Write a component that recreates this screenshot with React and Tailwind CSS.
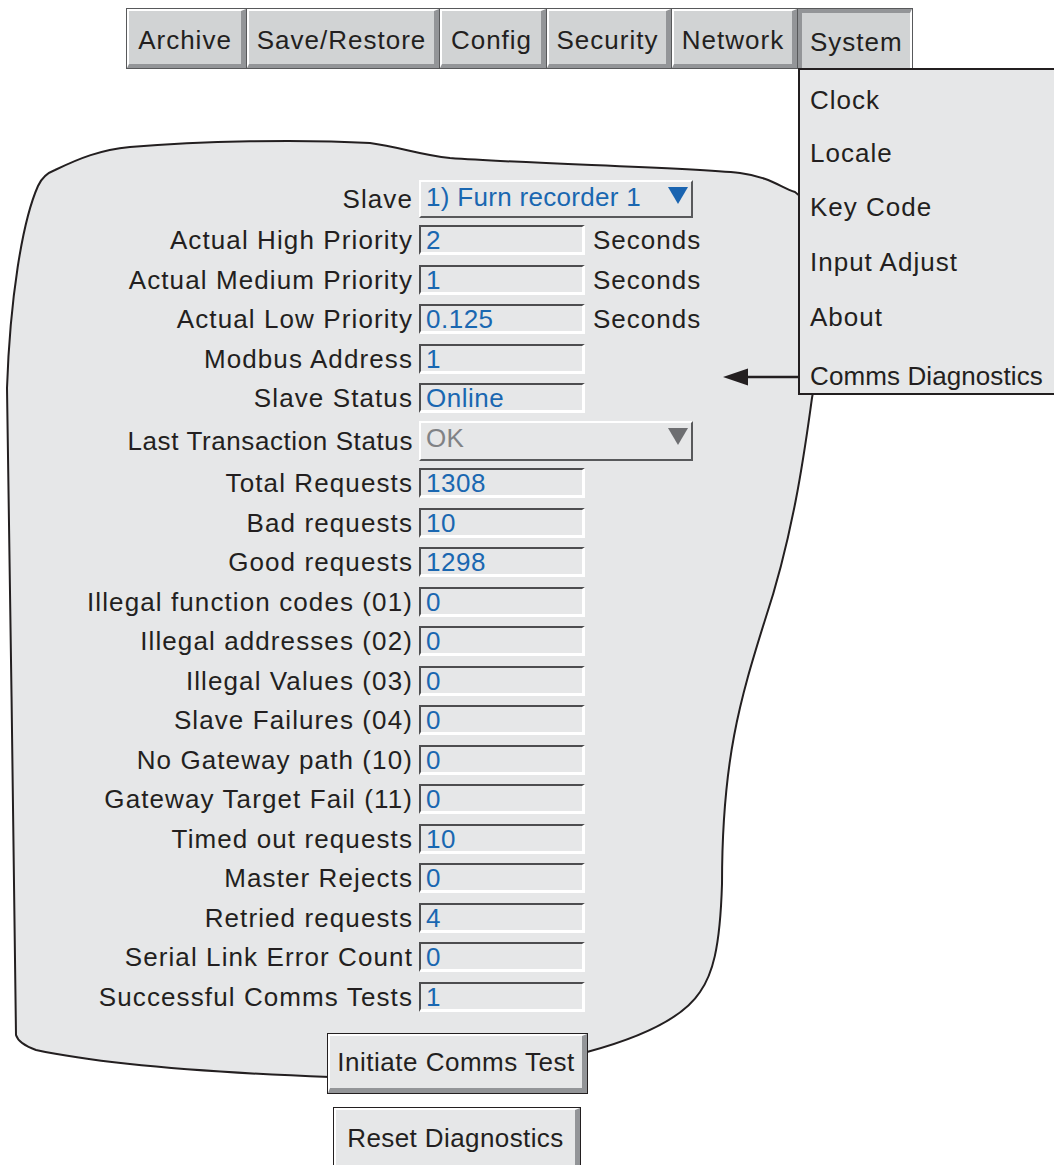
import React from "react";

const topRows = [
  ["Actual High Priority", "2", true],
  ["Actual Medium Priority", "1", true],
  ["Actual Low Priority", "0.125", true],
  ["Modbus Address", "1"],
  ["Slave Status", "Online"],
];

const counterRows = [
  ["Total Requests", "1308"],
  ["Bad requests", "10"],
  ["Good requests", "1298"],
  ["Illegal function codes (01)", "0"],
  ["Illegal addresses (02)", "0"],
  ["Illegal Values (03)", "0"],
  ["Slave Failures (04)", "0"],
  ["No Gateway path (10)", "0"],
  ["Gateway Target Fail (11)", "0"],
  ["Timed out requests", "10"],
  ["Master Rejects", "0"],
  ["Retried requests", "4"],
  ["Serial Link Error Count", "0"],
  ["Successful Comms Tests", "1"],
];

const tabs = [
  ["Archive", "w-[119px]"],
  ["Save/Restore", "w-[192px]"],
  ["Config", "w-[106px]"],
  ["Security", "w-[124px]"],
  ["Network", "w-[125px]"],
];

const menuItems = [
  ["Clock", "h-[53px]"],
  ["Locale", "h-[53px]"],
  ["Key Code", "h-[55px]"],
  ["Input Adjust", "h-[55px]"],
  ["About", "h-[55px]"],
];

function Label({ children, tight }) {
  return (
    <div
      className={`w-[413px] shrink-0 text-right leading-[30px] whitespace-nowrap ${
        tight ? "tracking-[0.6px]" : "tracking-[1.1px]"
      }`}
    >
      {children}
    </div>
  );
}

function ValueBox({ value }) {
  return (
    <div className="ml-[6px] h-[30px] w-[166px] border-t-2 border-l-2 border-t-[#4d4d4f] border-l-[#4d4d4f] border-r-[3px] border-b-[3px] border-r-white border-b-white bg-[#e6e7e8] pl-[5px] text-[#1a67b1] tracking-[0.5px] leading-[27px] overflow-hidden whitespace-nowrap">
      {value}
    </div>
  );
}

function Dropdown({ text, textClass, arrowClass }) {
  return (
    <div className="ml-[6px] flex h-full w-[274px] items-start justify-between border-t-2 border-l-2 border-t-white border-l-white border-r-2 border-b-2 border-r-[#58595b] border-b-[#58595b] bg-[#e6e7e8] pl-[5px] pr-[3px]">
      <span className={`leading-[30px] tracking-[0.3px] whitespace-nowrap ${textClass}`}>{text}</span>
      <svg width="20" height="17" viewBox="0 0 20 17" className={`mt-[5px] ${arrowClass}`}>
        <polygon points="0,0 20,0 10,17" fill="currentColor" />
      </svg>
    </div>
  );
}

function Row({ label, value, seconds }) {
  return (
    <div className="flex h-[39.5px] items-center">
      <Label>{label}</Label>
      <ValueBox value={value} />
      {seconds && <span className="ml-[8px] tracking-[1px] leading-[30px]">Seconds</span>}
    </div>
  );
}

function BevelButton({ children, outer, inner }) {
  return (
    <div className={`border border-[#231f20] ${outer}`}>
      <div
        className={`flex items-center justify-center border-t-2 border-l-2 border-t-white border-l-white border-r-[5px] border-b-[5px] border-r-[#939598] border-b-[#939598] bg-[#e6e7e8] leading-[30px] ${inner}`}
      >
        {children}
      </div>
    </div>
  );
}

export default function App() {
  return (
    <div className="relative h-[1165px] w-[1054px] overflow-hidden bg-white font-['Liberation_Sans',Arial,sans-serif] text-[26px] leading-[30px] text-[#231f20]">
      {/* panel outline and pointer arrow */}
      <svg className="absolute inset-0" width="1054" height="1165" viewBox="0 0 1054 1165">
        <path
          d="M 7 388
             C 10 300, 22 222, 38 186
             C 42 177, 47 173, 55 170
             C 80 158, 100 150, 130 147
             C 200 141, 300 139, 370 143
             C 400 147, 420 155, 450 158
             C 530 164, 680 167, 740 173
             C 770 177, 780 187, 795 192
             C 822 210, 832 300, 812 398
             C 806 440, 795 530, 765 620
             C 740 700, 722 760, 722 884
             C 720 950, 712 975, 700 992
             C 685 1015, 650 1035, 587 1052
             L 330 1077
             C 250 1074, 120 1068, 36 1050
             C 25 1046, 18 1042, 16 1035
             C 14 900, 10 550, 7 388 Z"
          fill="#e6e7e8"
          stroke="#231f20"
          strokeWidth="2"
        />
        <line x1="745" y1="377" x2="800" y2="377" stroke="#231f20" strokeWidth="2.5" />
        <polygon points="723,377 748,368.5 748,385.5" fill="#231f20" />
      </svg>

      <div className="relative">
        {/* top tab bar */}
        <div className="ml-[126px] mt-[8px] flex w-[787px] gap-px border border-[#58595b] bg-[#58595b]">
          {tabs.map(([name, w]) => (
            <div
              key={name}
              className={`${w} flex h-[59px] shrink-0 items-center justify-center border-t-2 border-l-2 border-t-white border-l-white border-r-[5px] border-b-[4px] border-r-[#939598] border-b-[#939598] bg-[#d1d3d4] pt-[4px] tracking-[1px]`}
            >
              {name}
            </div>
          ))}
          <div className="flex h-[59px] flex-1 items-center border-t-4 border-l-4 border-t-[#939598] border-l-[#939598] border-r-2 border-r-white bg-[#d1d3d4] pl-[8px] pt-[2px] tracking-[1px]">
            System
          </div>
        </div>

        {/* diagnostics form */}
        <div className="mt-[111px] flex flex-col">
          <div className="mb-[2.25px] flex h-[38px] items-center">
            <Label>Slave</Label>
            <Dropdown text="1) Furn recorder 1" textClass="text-[#1a67b1]" arrowClass="text-[#1a64b0]" />
          </div>
          {topRows.map(([l, v, s]) => (
            <Row key={l} label={l} value={v} seconds={s} />
          ))}
          <div className="mt-[3.25px] mb-[2.25px] flex h-[40px] items-center">
            <Label tight>Last Transaction Status</Label>
            <Dropdown text="OK" textClass="text-[#808285]" arrowClass="text-[#6d6e71]" />
          </div>
          {counterRows.map(([l, v]) => (
            <Row key={l} label={l} value={v} />
          ))}
        </div>

        {/* action buttons */}
        <div className="mt-[16.75px] flex flex-col">
          <BevelButton outer="ml-[327px] w-[261px]" inner="h-[59px] tracking-[0.5px]">
            Initiate Comms Test
          </BevelButton>
          <BevelButton outer="ml-[333px] mt-[13px] w-[248px]" inner="h-[63px] tracking-[0.4px]">
            Reset Diagnostics
          </BevelButton>
        </div>
      </div>

      {/* open System menu */}
      <div className="absolute left-[798px] top-[68px] h-[327px] w-[300px] border-2 border-[#231f20] bg-[#e6e7e8] pt-[3.5px] pl-[10px]">
        {menuItems.map(([name, h]) => (
          <div key={name} className={`${h} flex items-center tracking-[1px]`}>
            {name}
          </div>
        ))}
        <div className="flex h-[48.5px] items-end pb-[2px] tracking-[0.1px]">Comms Diagnostics</div>
      </div>
    </div>
  );
}
